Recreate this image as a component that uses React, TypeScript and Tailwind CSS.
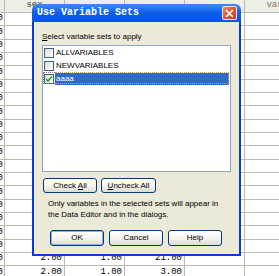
import React from "react";

const rowHeights = Array.from({ length: 20 }, (_, i) => (i % 3 === 1 ? "h-[14px]" : "h-[13px]"));

const col0 = ["1.00", "2.00", "1.00", "2.00", "1.00", "1.00", "2.00", "1.00", "2.00", "2.00", "1.00", "2.00", "1.00", "1.00", "2.00", "1.00", "2.00", "1.00", "1.00", "2.00"];

function Sheet() {
  return (
    <div className="flex flex-col font-['Liberation_Mono',monospace] text-[9px] text-black">
      <div className="flex h-[13px] bg-[#eeede6] border-b border-[#bdbab0]">
        <div className="w-[5px] shrink-0 border-r border-[#bdbab0]" />
        <div className="w-[60px] shrink-0 border-r border-[#bdbab0] flex items-center justify-center text-[#333]">sex</div>
        <div className="w-[60px] shrink-0 border-r border-[#bdbab0]" />
        <div className="w-[60px] shrink-0 border-r border-[#bdbab0]" />
        <div className="w-[60px] shrink-0 border-r border-[#bdbab0]" />
        <div className="w-[60px] shrink-0 border-r border-[#bdbab0] flex items-center justify-center text-[#777]">var</div>
      </div>
      {rowHeights.map((h, i) => {
        const last = i >= 18;
        return (
          <div key={i} className={`flex ${h} border-b border-[#bdbab0]`}>
            <div className="w-[5px] shrink-0 border-r border-[#bdbab0] flex items-center justify-end overflow-hidden whitespace-nowrap pr-[1px]">
              {col0[i]}
            </div>
            <div className="w-[60px] shrink-0 border-r border-[#bdbab0] flex items-center justify-end pr-[2px]">
              {last ? "2.00" : ""}
            </div>
            <div className="w-[60px] shrink-0 border-r border-[#bdbab0] flex items-center justify-end pr-[2px]">
              {last ? "1.00" : ""}
            </div>
            <div className="w-[60px] shrink-0 border-r border-[#bdbab0] flex items-center justify-end pr-[2px]">
              {i === 18 ? "21.00" : i === 19 ? "3.00" : ""}
            </div>
            <div className="w-[60px] shrink-0 border-r border-[#bdbab0]" />
            <div className="w-[60px] shrink-0 border-r border-[#bdbab0]" />
          </div>
        );
      })}
    </div>
  );
}

function CheckBox({ checked }: { checked?: boolean }) {
  return (
    <div className="w-[10px] h-[10px] shrink-0 border border-[#45607e] bg-linear-to-br from-[#dcdbd4] to-white flex items-center justify-center">
      {checked && (
        <svg width="8" height="8" viewBox="0 0 8 8">
          <polyline points="1,4 3,6 7,1.5" fill="none" stroke="#21a121" strokeWidth="1.6" />
        </svg>
      )}
    </div>
  );
}

function XPButton({ children, w, h, def }: { children: React.ReactNode; w: string; h: string; def?: boolean }) {
  return (
    <div
      className={`${w} ${h} shrink-0 rounded-[3px] border border-[#003c74] bg-linear-to-b from-white via-[#f6f5f0] to-[#dedbd0] flex items-center justify-center text-black ${
        def ? "shadow-[inset_0_0_0_1px_#8fb0f0]" : ""
      }`}
    >
      {children}
    </div>
  );
}

function Dialog() {
  return (
    <div className="absolute left-[32px] top-[4px] w-[209px] h-[252px] flex flex-col font-['Liberation_Sans',Arial,sans-serif] text-[8px] leading-[10px]">
      <div className="h-[18px] shrink-0 rounded-t-[6px] bg-linear-to-b from-[#3b8cf8] via-[#0c5ee8] to-[#0754e0] flex items-center justify-between pl-[5px] pr-[4px]">
        <span className="font-['Liberation_Mono',monospace] font-bold text-[10px] text-white">Use Variable Sets</span>
        <div className="w-[15px] h-[14px] rounded-[2px] border border-white/80 bg-linear-to-br from-[#ef8a6a] via-[#e0542f] to-[#c83c1c] flex items-center justify-center">
          <svg width="9" height="9" viewBox="0 0 9 9">
            <path d="M1.5 1.5 L7.5 7.5 M7.5 1.5 L1.5 7.5" stroke="white" strokeWidth="1.6" strokeLinecap="round" />
          </svg>
        </div>
      </div>
      <div className="flex-1 flex flex-col bg-[#ece9d8] border-x-2 border-b-2 border-[#0a3ad8] pt-[10px] px-[8px]">
        <div className="h-[10px] pl-[-1px] text-black">
          <span className="underline">S</span>elect variable sets to apply
        </div>
        <div className="mt-[3px] h-[127px] border border-[#8fa6bf] bg-white flex flex-col pt-0">
          <div className="flex items-center h-[13px] pl-[1px]">
            <CheckBox />
            <div className="ml-[1px] pl-[1px] text-black">ALLVARIABLES</div>
          </div>
          <div className="flex items-center h-[13px] pl-[1px]">
            <CheckBox />
            <div className="ml-[1px] pl-[1px] text-black">NEWVARIABLES</div>
          </div>
          <div className="relative flex items-center h-[13px] pl-[1px] pr-[1px]">
            <CheckBox checked />
            <div className="ml-[1px] flex-1 h-[12px] bg-[#316ac5] pl-[1px] text-white flex items-center">aaaa</div>
            <div className="pointer-events-none absolute left-0 top-0 h-[12px] w-[12px] border-y border-l border-dotted border-[#777]" />
            <div className="pointer-events-none absolute left-[12px] right-[1px] top-0 h-[12px] border-y border-r border-dotted border-[#d8a050]" />
          </div>
        </div>
        <div className="mt-[6px] flex gap-[4px] pl-[1px]">
          <XPButton w="w-[54px]" h="h-[15px]">
            <span>
              Check <span className="underline">A</span>ll
            </span>
          </XPButton>
          <XPButton w="w-[55px]" h="h-[15px]">
            <span>
              <span className="underline">U</span>ncheck All
            </span>
          </XPButton>
        </div>
        <div className="mt-[5px] ml-[6px] leading-[11px] text-black">
          Only variables in the selected sets will appear in
          <br />
          the Data Editor and in the dialogs.
        </div>
        <div className="mt-[10px] ml-[8px] flex gap-[5px]">
          <XPButton w="w-[54px]" h="h-[16px]" def>
            OK
          </XPButton>
          <XPButton w="w-[54px]" h="h-[16px]">
            Cancel
          </XPButton>
          <XPButton w="w-[54px]" h="h-[16px]">
            Help
          </XPButton>
        </div>
      </div>
    </div>
  );
}

export default function App() {
  return (
    <div className="relative w-[279px] h-[276px] overflow-hidden bg-white">
      <Sheet />
      <Dialog />
    </div>
  );
}
